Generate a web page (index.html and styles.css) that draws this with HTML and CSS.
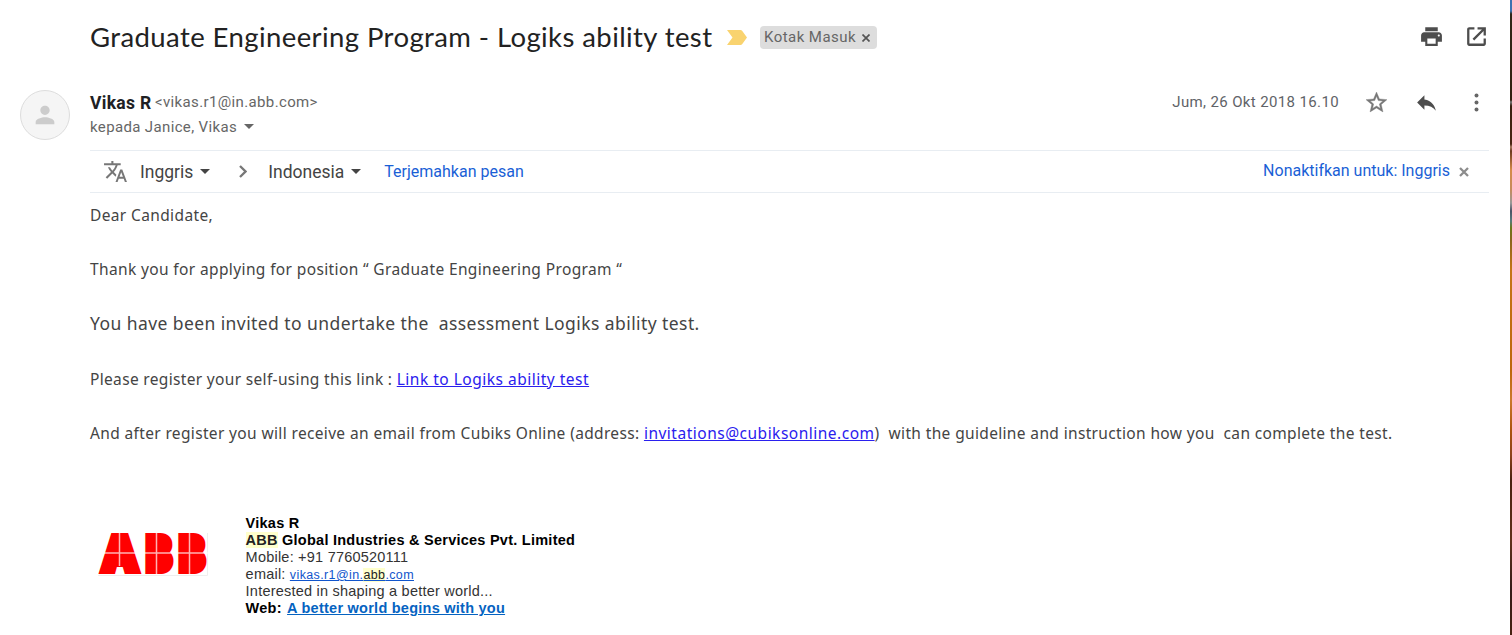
FILE: index.html
```html
<!DOCTYPE html>
<html lang="id">
	<head>
		<meta charset="UTF-8" />
		<meta name="viewport" content="width=device-width, initial-scale=1.0" />
		<title>Graduate Engineering Program - Logiks ability test</title>
		<link rel="stylesheet" href="styles.css">
	</head>
	<body>
		<div class="mail">
			<header class="subject">
				<h1>Graduate Engineering Program - Logiks ability test</h1>
				<svg class="important" width="20" height="15" viewBox="0 0 20 15"><path d="M0 0h13.5q1 0 1.600.8L20 7.500l-4.900 6.700q-.6.8-1.600.8H0l5.500-7.500z" fill="#f9d36f"/></svg>
				<span class="label"><span class="label-text">Kotak Masuk</span><svg width="8" height="8" viewBox="0 0 8 8"><path d="M.5.5l7 7m0-7l-7 7" stroke="#555" stroke-width="1.700"/></svg></span>
				<div class="tools">
					<svg width="25" height="25" viewBox="0 0 24 24"><path d="M19 8H5c-1.660 0-3 1.340-3 3v6h4v4h12v-4h4v-6c0-1.660-1.340-3-3-3zm-3 11H8v-5h8v5zm3-7c-.55 0-1-.45-1-1s.45-1 1-1 1 .45 1 1-.45 1-1 1zm-1-9H6v4h12V3z"/></svg>
					<svg width="25" height="25" viewBox="0 0 24 24"><path d="M10 3v2.200H5.200v13.600h13.600V14H21v5c0 1.100-.9 2-2 2H5c-1.100 0-2-.9-2-2V5c0-1.100.9-2 2-2h5zm3 0h8v8h-2.200V6.800L9.800 15.800l-1.600-1.600L17.200 5.200H13z"/></svg>
				</div>
			</header>

			<div class="sender">
				<div class="avatar">
					<svg width="28" height="28" viewBox="0 0 24 24"><path d="M12 12c2.210 0 4-1.790 4-4s-1.790-4-4-4-4 1.790-4 4 1.790 4 4 4zm0 2c-2.670 0-8 1.340-8 4v2h16v-2c0-2.660-5.330-4-8-4z"/></svg>
				</div>
				<div class="who">
					<div class="from"><b>Vikas R</b><span class="address">&lt;vikas.r1@in.abb.com&gt;</span></div>
					<div class="to"><span>kepada Janice, Vikas</span><i class="arrow"></i></div>
				</div>
				<div class="meta">
					<span class="date">Jum, 26 Okt 2018 16.10</span>
					<svg class="star" width="25" height="25" viewBox="0 0 24 24"><path d="M22 9.240l-7.190-.62L12 2 9.190 8.630 2 9.240l5.460 4.730L5.820 21 12 17.270 18.180 21l-1.630-7.030L22 9.240zM12 15.400l-3.760 2.270 1-4.280-3.320-2.880 4.380-.38L12 6.100l1.710 4.040 4.380.38-3.320 2.880 1 4.280L12 15.400z"/></svg>
					<svg width="25" height="25" viewBox="0 0 24 24"><path d="M10 9V5l-7 7 7 7v-4.100c5 0 8.500 1.600 11 5.100-1-5-4-10-11-11z"/></svg>
					<svg class="more" width="25" height="25" viewBox="0 0 24 24"><circle cx="12" cy="5.300" r="1.900"/><circle cx="12" cy="12" r="1.900"/><circle cx="12" cy="18.700" r="1.900"/></svg>
				</div>
			</div>

			<div class="translate">
				<svg class="translate-icon" width="25" height="25" viewBox="0 0 24 24"><path d="M12.870 15.070l-2.540-2.510.03-.03c1.740-1.940 2.980-4.170 3.710-6.530H17V4h-7V2H8v2H1v1.990h11.170C11.500 7.920 10.440 9.750 9 11.350 8.070 10.320 7.300 9.190 6.690 8h-2c.73 1.630 1.730 3.170 2.980 4.560l-5.090 5.020L4 19l5-5 3.110 3.110.76-2.040zM18.500 10h-2L12 22h2l1.120-3h4.750L21 22h2l-4.500-12zm-2.620 7l1.620-4.330L19.120 17h-3.240z"/></svg>
				<span class="lang">Inggris</span><i class="arrow dark"></i>
				<svg class="chevron" width="8" height="13" viewBox="0 0 8 13"><path d="M1 1l5.500 5.500L1 12" fill="none" stroke="#777" stroke-width="2.300"/></svg>
				<span class="lang">Indonesia</span><i class="arrow dark"></i>
				<a class="action">Terjemahkan pesan</a>
				<a class="disable">Nonaktifkan untuk: Inggris</a>
				<svg class="close" width="10" height="10" viewBox="0 0 10 10"><path d="M1 1l8 8m0-8L1 9" stroke="#8c8c8c" stroke-width="2.300"/></svg>
			</div>

			<div class="message">
				<p class="greeting">Dear Candidate,</p>
				<p class="applied">Thank you for applying for position “ Graduate Engineering Program “</p>
				<p class="invited">You have been invited to undertake the&nbsp; assessment Logiks ability test.</p>
				<p class="register">Please register your self-using this link : <a>Link to Logiks ability test</a></p>
				<p class="after">And after register you will receive an email from Cubiks Online (address: <a>invitations@cubiksonline.com</a>)&nbsp; with the guideline and instruction how you&nbsp; can complete the test.</p>
			</div>

			<div class="signature">
				<svg class="logo" width="110" height="43" viewBox="0 0 110 43">
					<path d="M109.500 0v42.500H0" fill="none" stroke="#eee"/>
					<g class="logo-text">
						<text x="3.500" y="38" textLength="37" lengthAdjust="spacingAndGlyphs">A</text>
						<text x="48" y="38" textLength="26" lengthAdjust="spacingAndGlyphs">B</text>
						<text x="81" y="38" textLength="26" lengthAdjust="spacingAndGlyphs">B</text>
					</g>
					<path d="M50 6h17v29H50zM83 6h17v29H83zM17 14h9v16h-9z" fill="#f00"/>
					<path d="M0 20h110M21.500 0v33M58.500 0v42M91.500 0v42" stroke="#fff" stroke-opacity=".7" stroke-width="1.500"/>
				</svg>
				<div class="contact">
					<div><b>Vikas R</b></div>
					<div><b><mark>ABB</mark> Global Industries &amp; Services Pvt. Limited</b></div>
					<div>Mobile: +91 7760520111</div>
					<div>email: <a class="email">vikas.r1@in.<mark>abb</mark>.com</a></div>
					<div>Interested in shaping a better world...</div>
					<div><b>Web: <a class="web">A better world begins with you</a></b></div>
				</div>
			</div>
		</div>
		<div class="wallpaper"></div>
	</body>
</html>
```

FILE: styles.css
```css
* {
	box-sizing: border-box;
}
body {
	margin: 0;
	height: 635px;
	overflow: hidden;
	display: flex;
	background: #fff;
	font-family: Roboto, sans-serif;
	color: #222;
}
svg {
	display: block;
	flex: none;
	fill: #4d4d4d;
}
.mail {
	flex: 1;
	padding: 0 21px 0 90px;
	white-space: nowrap;
}
.wallpaper {
	width: 2px;
	background: linear-gradient(#3d72b0 0, #3d72b0 11px, #302819 14px, #33200f 100px, #777 102px, #38200f 106px, #4a2513 144px, #a87961 147px, #6c3920 151px, #d58b48 170px, #c48b5d 190px, #999 203px, #4b5366 211px, #577b7b 221px, #6c7819 228px, #8a651b 240px, #c57516 270px, #bd670c 370px, #ca792b 400px, #ac540e 430px, #8d431b 455px, #492010 480px, #61301a 540px, #351b19 590px, #482111 635px);
}

/* subject */
.subject {
	display: flex;
	align-items: center;
	height: 75px;
}
.subject h1 {
	width: 637px;
	margin: 0;
	padding-bottom: 2px;
	font: 400 27.5px Lato, sans-serif;
	letter-spacing: 0.41px;
}
.label {
	display: flex;
	align-items: center;
	gap: 5px;
	width: 117px;
	height: 23px;
	margin-left: 13px;
	padding: 0 4px;
	border-radius: 4px;
	background: #ddd;
	color: #666;
	font-size: 15px;
	letter-spacing: 0.45px;
}
.label-text {
	width: 93px;
	padding-bottom: 1px;
}
.tools {
	display: flex;
	gap: 20px;
	margin-left: auto;
	padding-bottom: 3px;
}

/* sender */
.sender {
	display: flex;
	height: 75px;
	padding-top: 15px;
	margin-left: -70px;
}
.avatar {
	display: flex;
	align-items: center;
	justify-content: center;
	width: 50px;
	height: 50px;
	margin-right: 20px;
	border: 1px solid #ddd;
	border-radius: 50%;
	background: #f5f5f5;
}
.avatar svg {
	fill: #ccc;
}
.from,
.to {
	display: flex;
	align-items: center;
	height: 25px;
	padding-bottom: 2px;
	font-size: 15px;
	letter-spacing: 0.36px;
	color: #666;
}
.from b {
	width: 65px;
	padding-top: 2px;
	color: #202124;
	font-size: 17.5px;
	font-weight: 700;
	letter-spacing: 0.3px;
}
.arrow {
	margin-left: 7px;
	border: 5px solid transparent;
	border-top-color: #666;
	border-bottom: 0;
}
.arrow.dark {
	border-top-color: #444;
}
.meta {
	display: flex;
	align-items: center;
	gap: 25px;
	height: 25px;
	margin-left: auto;
}
.date {
	padding-bottom: 2px;
	color: #5f6368;
	font-size: 15px;
	letter-spacing: 0.37px;
}
.star {
	fill: #777;
	stroke: #777;
	stroke-width: 0.4px;
}
.more {
	fill: #666;
}

/* translate bar */
.translate {
	display: flex;
	align-items: center;
	height: 43px;
	padding: 0 20px 0 13px;
	border-top: 1px solid #e8edf2;
	border-bottom: 1px solid #e8edf2;
	font-size: 17.5px;
	color: #444;
}
.translate-icon {
	margin-right: 12px;
	fill: #777;
}
.chevron {
	margin: 0 21px 0 29px;
}
.action,
.disable {
	color: #1a5fd6;
	font-size: 16px;
}
.action {
	margin-left: 23px;
}
.disable {
	margin: 0 9px 2px auto;
}

/* message */
.message {
	height: 322px;
	padding-top: 10px;
	color: #444;
	font-family: "Noto Sans", sans-serif;
	font-size: 15.5px;
	letter-spacing: 0.37px;
	line-height: 24px;
}
.message p {
	margin: 0 0 30px;
}
.message .invited {
	margin: 0 0 31px;
	font-size: 17.5px;
	letter-spacing: 0.42px;
	line-height: 25px;
}
.message .register,
.message .after {
	letter-spacing: 0.33px;
}
.message a {
	color: #2a20ee;
	letter-spacing: 0.5px;
	text-decoration: underline;
}
.message .after {
	word-spacing: 0.15px;
}

/* signature */
.signature {
	display: flex;
	padding-left: 8px;
}
.logo {
	overflow: visible;
	margin: 18px 37.6px 0 0;
}
.logo-text {
	fill: #f00;
	stroke: #f00;
	stroke-width: 6px;
	font: 900 48px/1 Inter, sans-serif;
}
.contact {
	color: #333;
	font: 14.500px/17px "Liberation Sans", Arial, sans-serif;
	letter-spacing: 0.22px;
}
.contact div {
	height: 17px;
}
.contact b {
	color: #000;
	letter-spacing: 0.25px;
}
.contact mark {
	background: #ffc;
	color: #222;
}
.contact a {
	text-decoration: underline;
}
.contact .email {
	color: #15c;
	font-size: 12.500px;
	letter-spacing: 0.38px;
}
.contact .web {
	margin-left: 1px;
	color: #0563c1;
}
```
